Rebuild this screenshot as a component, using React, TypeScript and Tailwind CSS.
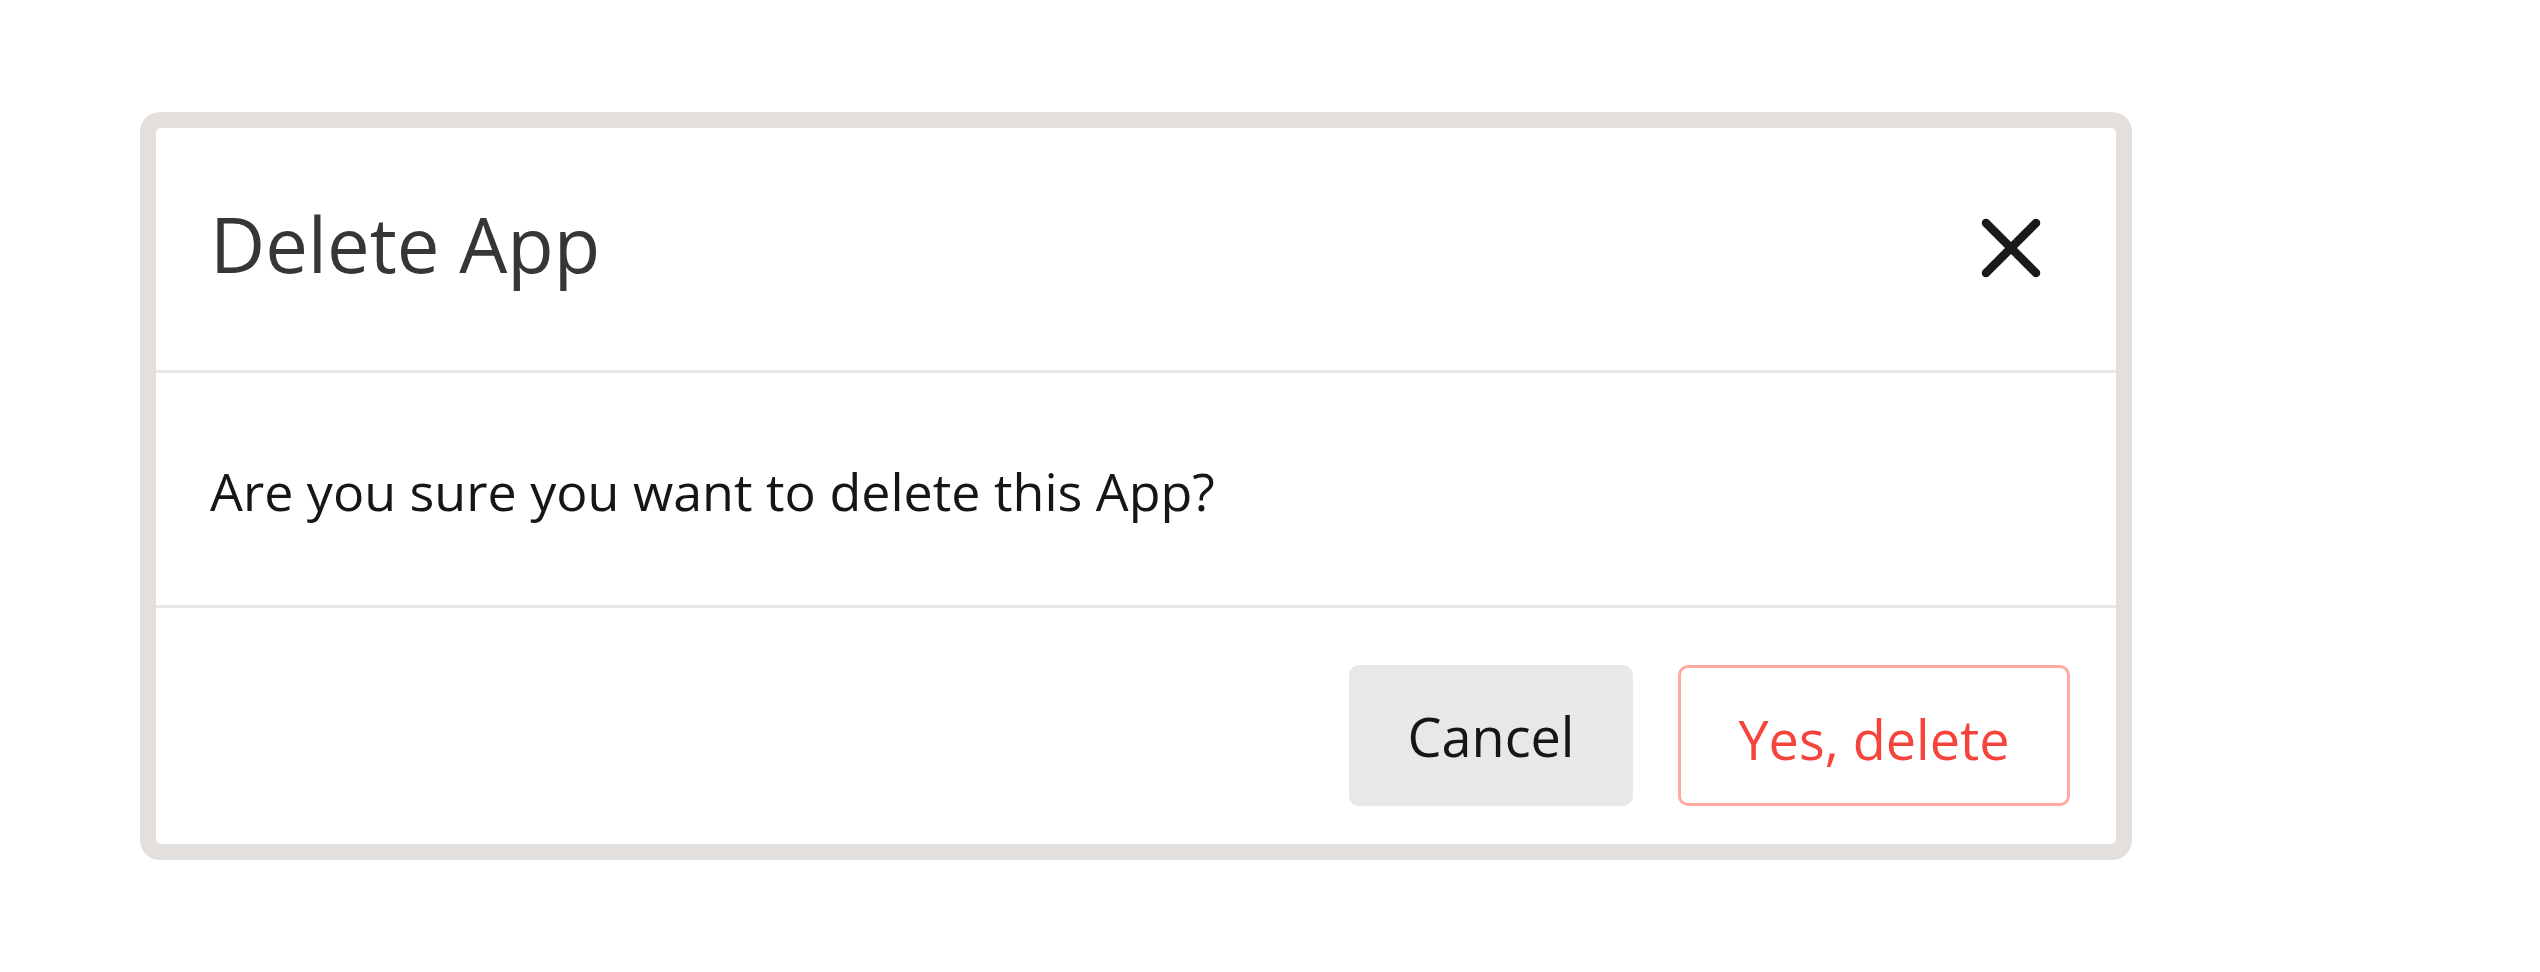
import * as React from "react";

function CloseIcon() {
  return (
    <svg width="60" height="60" viewBox="0 0 60 60" fill="none" aria-hidden className="mb-[3px]">
      <path d="M5 5L55 55M55 5L5 55" stroke="#1a1a1a" strokeWidth="8.5" strokeLinecap="round" />
    </svg>
  );
}

export default function App() {
  return (
    <div
      className="min-h-[972px] w-full bg-white pl-[140px] pt-[112px]"
      style={{ fontFamily: '"Open Sans", "Noto Sans", sans-serif' }}
    >
      <div className="w-[1992px] rounded-[20px] bg-[#e2dfdd] p-[16px]">
        <div className="flex flex-col overflow-hidden rounded-[5px] bg-white">
          {/* header */}
          <div className="flex h-[245px] items-center justify-between border-b-[3px] border-[#e8e8e8] pl-[54px] pr-[75px]">
            <h2 className="mb-[10px] text-[76px] leading-none font-normal text-[#363636]">Delete App</h2>
            <button type="button" aria-label="Close" className="flex items-center">
              <CloseIcon />
            </button>
          </div>

          {/* body */}
          <div className="flex h-[235px] items-center border-b-[3px] border-[#e8e8e8] px-[54px]">
            <p className="mt-[3px] text-[52px] leading-none text-[#161616]">Are you sure you want to delete this App?</p>
          </div>

          {/* footer */}
          <div className="flex h-[236px] items-start justify-end gap-[45px] pr-[46px] pt-[57px]">
            <button
              type="button"
              className="flex h-[141px] w-[284px] items-center justify-center rounded-[10px] bg-[#e8e8e8] text-[54px] leading-none font-medium text-[#161616]"
            >
              Cancel
            </button>
            <button
              type="button"
              className="flex h-[141px] w-[392px] items-center justify-center rounded-[10px] border-[3px] border-[#ffa9a1] bg-white pt-[6px] text-[54px] leading-none font-medium text-[#f5443b]"
            >
              Yes, delete
            </button>
          </div>
        </div>
      </div>
    </div>
  );
}
